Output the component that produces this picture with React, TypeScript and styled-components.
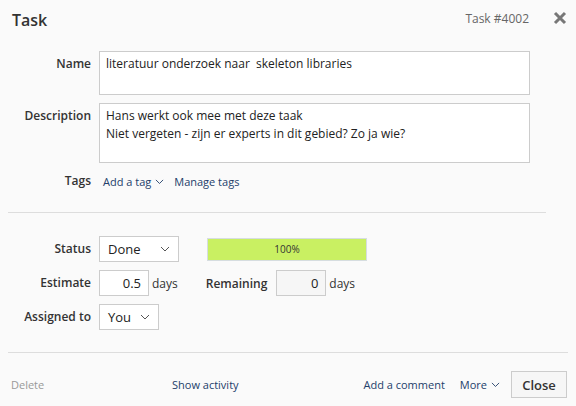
import styled, { createGlobalStyle } from "styled-components";

const GlobalStyle = createGlobalStyle`
  html, body {
    margin: 0;
    padding: 0;
    background: #fafafa;
  }
  body {
    font-family: "Open Sans", "Liberation Sans", sans-serif;
    font-size: 12px;
    color: #333;
  }
`;

function Chevron({ size = 9, color = "#555" }: { size?: number; color?: string }) {
  return (
    <svg width={size} height={size * 0.6} viewBox="0 0 10 6" fill="none">
      <path d="M1 1l4 4 4-4" stroke={color} strokeWidth="1" />
    </svg>
  );
}

export default function App() {
  return (
    <>
      <GlobalStyle />
      <Dialog>
        <Header>
          <Title>Task</Title>
          <TaskId>Task #4002</TaskId>
          <CloseX aria-label="close">
            <svg width="14" height="14" viewBox="0 0 14 14">
              <path d="M2 2l10 10M12 2L2 12" stroke="#777" strokeWidth="3" />
            </svg>
          </CloseX>
        </Header>

        <Form>
          <Label>Name</Label>
          <TextBox $height={44}>literatuur onderzoek naar&nbsp; skeleton libraries</TextBox>

          <Label>Description</Label>
          <TextBox $height={60}>
            Hans werkt ook mee met deze taak
            <br />
            Niet vergeten - zijn er experts in dit gebied? Zo ja wie?
          </TextBox>

          <Label $plain>Tags</Label>
          <TagLinks>
            <Link>
              Add a tag <Chevron size={9} color="#23406a" />
            </Link>
            <Link>Manage tags</Link>
          </TagLinks>
        </Form>

        <Divider $right={30} $top={21} />

        <Fields>
          <Label $plain>Status</Label>
          <Row>
            <Select $width={80}>
              Done <Chevron size={10} />
            </Select>
            <Progress>100%</Progress>
          </Row>

          <Label $plain>Estimate</Label>
          <Row>
            <NumberBox>0.5</NumberBox>
            <Unit>days</Unit>
            <SubLabel>Remaining</SubLabel>
            <NumberBox $readonly>0</NumberBox>
            <Unit>days</Unit>
          </Row>

          <Label $plain>Assigned to</Label>
          <Row>
            <Select $width={60}>
              You <Chevron size={10} />
            </Select>
          </Row>
        </Fields>

        <Divider $right={8} $top={22} />

        <Footer>
          <Muted>Delete</Muted>
          <Center>
            <Link>Show activity</Link>
          </Center>
          <Link>Add a comment</Link>
          <More>
            More <Chevron size={9} color="#23406a" />
          </More>
          <Button>Close</Button>
        </Footer>
      </Dialog>
    </>
  );
}

const Dialog = styled.div`
  width: 576px;
  height: 406px;
  display: flex;
  flex-direction: column;
  box-sizing: border-box;
`;

const Header = styled.div`
  display: flex;
  align-items: center;
  padding: 6px 9px 0 12px;
  height: 28px;
`;

const Title = styled.h1`
  margin: 0;
  flex: 1;
  font-size: 16px;
  font-weight: 600;
  color: #333;
`;

const TaskId = styled.span`
  font-size: 12px;
  color: #666;
  margin-right: 24px;
  margin-top: -4px;
`;

const CloseX = styled.span`
  display: flex;
  margin-top: -4px;
`;

const Form = styled.div`
  display: grid;
  grid-template-columns: 91px 431px;
  column-gap: 8px;
  row-gap: 8px;
  align-items: start;
  padding-top: 17px;
`;

const Label = styled.div<{ $plain?: boolean }>`
  text-align: right;
  font-weight: 600;
  color: #333;
  font-size: 12px;
  line-height: 18px;
  padding-top: ${(p) => (p.$plain ? "0" : "4px")};
  align-self: ${(p) => (p.$plain ? "center" : "start")};
`;

const TextBox = styled.div<{ $height: number }>`
  box-sizing: border-box;
  height: ${(p) => p.$height}px;
  background: #fff;
  border: 1px solid #ccc;
  padding: 3px 6px;
  line-height: 18px;
  color: #222;
`;

const TagLinks = styled.div`
  display: flex;
  gap: 10px;
  align-items: center;
  padding: 2px 0 0 4px;
  line-height: 18px;
  font-size: 11px;
`;

const Link = styled.span`
  color: #23406a;
  font-size: 11px;
  display: inline-flex;
  align-items: center;
  gap: 4px;
  cursor: pointer;
`;

const More = styled(Link)`
  margin-left: 15px;
`;

const Divider = styled.hr<{ $right: number; $top: number }>`
  border: 0;
  border-top: 1px solid #ddd;
  margin: ${(p) => p.$top}px ${(p) => p.$right}px 0 8px;
`;

const Fields = styled.div`
  display: grid;
  grid-template-columns: 91px auto;
  grid-auto-rows: 26px;
  column-gap: 8px;
  row-gap: 8px;
  align-items: center;
  padding-top: 23px;
`;

const Row = styled.div`
  display: flex;
  align-items: center;
`;

const Select = styled.div<{ $width: number }>`
  box-sizing: border-box;
  width: ${(p) => p.$width}px;
  height: 26px;
  background: #fff;
  border: 1px solid #ccc;
  display: flex;
  align-items: center;
  justify-content: space-between;
  padding: 0 8px 0 8px;
  font-size: 13px;
  color: #222;
`;

const Progress = styled.div`
  box-sizing: border-box;
  margin-left: 28px;
  width: 160px;
  height: 23px;
  background: #c9f062;
  border: 1px solid #d6dde0;
  display: flex;
  align-items: center;
  justify-content: center;
  font-size: 10px;
  color: #333;
`;

const NumberBox = styled.div<{ $readonly?: boolean }>`
  box-sizing: border-box;
  width: 50px;
  height: 26px;
  background: ${(p) => (p.$readonly ? "#f6f6f6" : "#fff")};
  border: 1px solid #ccc;
  display: flex;
  align-items: center;
  justify-content: flex-end;
  padding-right: 7px;
  font-size: 13px;
  color: #222;
`;

const Unit = styled.span`
  margin-left: 3px;
  font-size: 12px;
  color: #333;
`;

const SubLabel = styled.span`
  margin: 0 9px 0 28px;
  font-weight: 600;
  color: #333;
`;

const Footer = styled.div`
  display: flex;
  align-items: center;
  padding: 18px 9px 0 11px;
`;

const Muted = styled.span`
  color: #999;
  font-size: 11px;
  width: 161px;
`;

const Center = styled.span`
  flex: 1;
  display: flex;
`;

const Button = styled.button`
  margin-left: 11px;
  box-sizing: border-box;
  width: 56px;
  height: 27px;
  background: #f6f6f6;
  border: 1px solid #ccc;
  font-family: inherit;
  font-size: 13px;
  font-weight: 600;
  color: #333;
  padding: 0;
`;
